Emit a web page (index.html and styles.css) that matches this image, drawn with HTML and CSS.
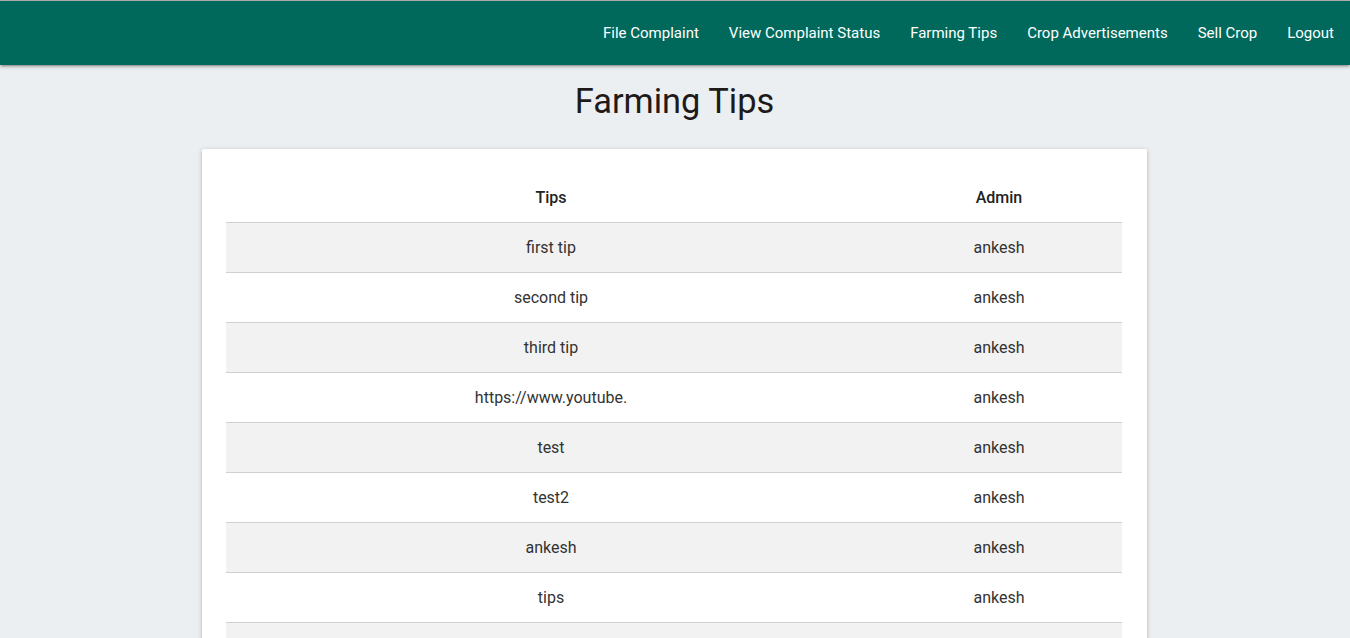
FILE: index.html
```html
<!DOCTYPE html>
<html>
<head>
<meta charset="utf-8">
<link rel="stylesheet" href="styles.css">
</head>
<body>
<div class="topline"></div>
<nav class="navbar">
  <ul class="nav-links">
    <li><a href="#">File Complaint</a></li>
    <li><a href="#">View Complaint Status</a></li>
    <li><a href="#">Farming Tips</a></li>
    <li><a href="#">Crop Advertisements</a></li>
    <li><a href="#">Sell Crop</a></li>
    <li><a href="#">Logout</a></li>
  </ul>
</nav>
<main class="main">
  <h4 class="title">Farming Tips</h4>
  <div class="card">
    <table class="tips-table">
      <thead>
        <tr><th class="col-tips">Tips</th><th>Admin</th></tr>
      </thead>
      <tbody>
        <tr><td>first tip</td><td>ankesh</td></tr>
        <tr><td>second tip</td><td>ankesh</td></tr>
        <tr><td>third tip</td><td>ankesh</td></tr>
        <tr><td>https://www.youtube.</td><td>ankesh</td></tr>
        <tr><td>test</td><td>ankesh</td></tr>
        <tr><td>test2</td><td>ankesh</td></tr>
        <tr><td>ankesh</td><td>ankesh</td></tr>
        <tr><td>tips</td><td>ankesh</td></tr>
        <tr><td>&nbsp;</td><td>&nbsp;</td></tr>
      </tbody>
    </table>
  </div>
</main>
</body>
</html>
```
FILE: styles.css
```css
html, body {
  margin: 0;
  padding: 0;
}
body {
  background: #eceff1;
  font-family: Roboto, "Liberation Sans", sans-serif;
  color: rgba(0,0,0,0.87);
  overflow: hidden;
}
.topline {
  height: 1px;
  background: #b4b4b4;
}
.navbar {
  height: 64px;
  background: #00695c;
  box-shadow: 0 2px 2px 0 rgba(0,0,0,0.14), 0 3px 1px -2px rgba(0,0,0,0.12), 0 1px 5px 0 rgba(0,0,0,0.2);
  display: flex;
  justify-content: flex-end;
  position: relative;
  z-index: 2;
}
.nav-links {
  list-style: none;
  margin: 0;
  padding: 0 1px 0 0;
  display: flex;
}
.nav-links a {
  display: block;
  padding: 0 15px;
  line-height: 64px;
  font-size: 15px;
  color: #fff;
  text-decoration: none;
}
.main {
  display: flex;
  flex-direction: column;
  align-items: center;
  padding-right: 1px;
}
.title {
  margin: 14px 0 0;
  font-size: 34.4px;
  font-weight: 400;
  line-height: 44px;
  color: #1f1a1a;
}
.card {
  margin-top: 26px;
  width: 945px;
  box-sizing: border-box;
  background: #fff;
  padding: 24px 25px 24px 24px;
  box-shadow: 0 2px 2px 0 rgba(0,0,0,0.14), 0 3px 1px -2px rgba(0,0,0,0.12), 0 1px 5px 0 rgba(0,0,0,0.2);
  border-radius: 2px;
}
.tips-table {
  width: 100%;
  border-collapse: collapse;
}
.tips-table th, .tips-table td {
  text-align: center;
  padding: 15px 5px;
  font-size: 16px;
  line-height: 19px;
  border-bottom: 1px solid #d0d0d0;
}
.tips-table th {
  font-weight: 500;
  color: #222;
}
.tips-table td {
  color: #333;
}
.col-tips {
  width: 640px;
}
.tips-table tbody tr:nth-child(odd) {
  background: #f2f2f2;
}
```
